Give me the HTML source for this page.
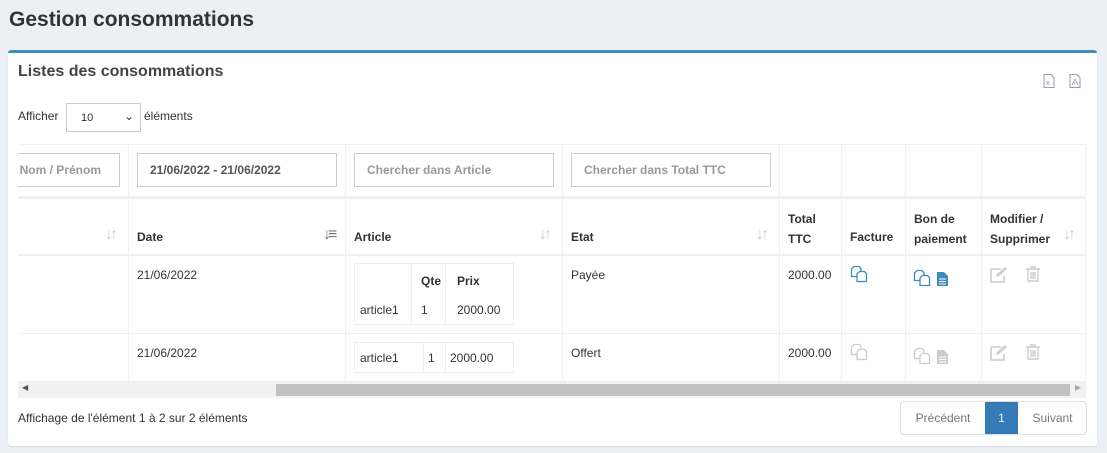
<!DOCTYPE html>
<html><head><meta charset="utf-8"><style>
*{box-sizing:border-box;margin:0;padding:0}
body{width:1107px;height:453px;background:#ecf0f5;font-family:"Liberation Sans",sans-serif;color:#333;position:relative;overflow:hidden;font-size:12px}
.a{position:absolute}
.b{font-weight:bold}
.vl{position:absolute;width:1px;background:#f0f0f0}
.hl{position:absolute;height:1px;background:#f0f0f0}
.inp{position:absolute;height:34px;border:1px solid #ccc;background:#fff;color:#999;font-weight:bold;font-size:12px;padding:9px 12px;white-space:nowrap;overflow:hidden}
.srt{position:absolute;color:#ccc;font-size:16px;font-weight:bold;letter-spacing:-3px}
</style></head><body>
<div class="a" style="left:9px;top:8px;font-size:21px;font-weight:bold;color:#333">Gestion consommations</div>
<div class="a" style="left:8px;top:50px;width:1089px;height:396px;background:#fff;border-top:3px solid #3c8dbc;border-radius:3px;box-shadow:0 1px 1px rgba(0,0,0,.1)"></div>
<div class="a" style="left:18px;top:63px;font-size:16px;font-weight:bold;color:#444">Listes des consommations</div>
<svg class="a" style="left:1043px;top:74px" width="12" height="14" viewBox="0 0 12 14"><path d="M1 .5h7l3 3v10H1z" fill="none" stroke="#99a" /><text x="3" y="11" font-size="7" fill="#88a" font-family="Liberation Sans">x</text></svg>
<svg class="a" style="left:1069px;top:74px" width="12" height="14" viewBox="0 0 12 14"><path d="M1 .5h7l3 3v10H1z" fill="none" stroke="#99a"/><path d="M3 11l3-6 3 6M4 9h4" fill="none" stroke="#99a" stroke-width=".8"/></svg>
<div class="a" style="left:18px;top:109px;font-size:12px">Afficher</div>
<div class="a" style="left:66px;top:103px;width:75px;height:29px;border:1px solid #ccc;font-size:11px;padding:8px 0 0 14px">10<span style="position:absolute;right:6px;top:5px;font-size:12px">&#8964;</span></div>
<div class="a" style="left:144px;top:109px;font-size:12px">éléments</div>

<div class="a" style="left:18px;top:144px;width:1068px;height:237px;overflow:hidden">
 <div class="hl" style="left:0;top:0;width:1068px"></div>
 <div class="a" style="left:0;top:52px;width:1068px;height:3px;background:#f0f0f0"></div>
 <div class="a" style="left:0;top:110px;width:1068px;height:2px;background:#f0f0f0"></div>
 <div class="hl" style="left:0;top:189px;width:1068px"></div>
 <div class="vl" style="left:110px;top:0;height:237px"></div>
 <div class="vl" style="left:327px;top:0;height:237px"></div>
 <div class="vl" style="left:544px;top:0;height:237px"></div>
 <div class="vl" style="left:761px;top:0;height:237px"></div>
 <div class="vl" style="left:823px;top:0;height:237px"></div>
 <div class="vl" style="left:887px;top:0;height:237px"></div>
 <div class="vl" style="left:963px;top:0;height:237px"></div>
 <div class="vl" style="left:1067px;top:0;height:237px"></div>
 <div class="inp" style="left:-40px;top:9px;width:142px;text-align:right;padding-right:18px">Nom / Prénom</div>
 <div class="inp" style="left:119px;top:9px;width:200px;color:#555;padding-left:12px">21/06/2022 - 21/06/2022</div>
 <div class="inp" style="left:336px;top:9px;width:200px">Chercher dans Article</div>
 <div class="inp" style="left:553px;top:9px;width:200px">Chercher dans Total TTC</div>
 <div class="srt" style="left:87px;top:82px">↓↑</div>
 <div class="a b" style="left:119px;top:86px">Date</div><div class="srt" style="left:305px;top:82px;color:#777">↓≡</div>
 <div class="a b" style="left:336px;top:86px">Article</div><div class="srt" style="left:521px;top:82px">↓↑</div>
 <div class="a b" style="left:553px;top:86px">Etat</div><div class="srt" style="left:738px;top:82px">↓↑</div>
 <div class="a b" style="left:770px;top:65px;line-height:20px">Total<br>TTC</div>
 <div class="a b" style="left:832px;top:86px">Facture</div>
 <div class="a b" style="left:896px;top:65px;line-height:20px">Bon de<br>paiement</div>
 <div class="a b" style="left:972px;top:65px;line-height:20px">Modifier /<br>Supprimer</div><div class="srt" style="left:1045px;top:82px">↓↑</div>
 <div class="a" style="left:119px;top:124px">21/06/2022</div>
 <div class="a" style="left:336px;top:119px;width:160px;height:62px;border:1px solid #eee"></div>
 <div class="vl" style="left:393px;top:119px;height:62px;background:#eee"></div>
 <div class="vl" style="left:427px;top:119px;height:62px;background:#eee"></div>
 <div class="a b" style="left:403px;top:130px">Qte</div><div class="a b" style="left:439px;top:130px">Prix</div>
 <div class="a" style="left:342px;top:159px">article1</div><div class="a" style="left:403px;top:159px">1</div><div class="a" style="left:439px;top:159px">2000.00</div>
 <div class="a" style="left:553px;top:124px">Payée</div>
 <div class="a" style="left:770px;top:124px">2000.00</div>
 <div class="a" style="left:119px;top:202px">21/06/2022</div>
 <div class="a" style="left:336px;top:198px;width:160px;height:31px;border:1px solid #eee"></div>
 <div class="vl" style="left:405px;top:198px;height:31px;background:#eee"></div>
 <div class="vl" style="left:427px;top:198px;height:31px;background:#eee"></div>
 <div class="a" style="left:342px;top:207px">article1</div><div class="a" style="left:410px;top:207px">1</div><div class="a" style="left:432px;top:207px">2000.00</div>
 <div class="a" style="left:553px;top:202px">Offert</div>
 <div class="a" style="left:770px;top:202px">2000.00</div>
</div>
<svg width="0" height="0" style="position:absolute"><defs>
<g id="cp"><path d="M4 1.5h5l2 2v8H1.5V4z" fill="#fff" stroke="currentColor" stroke-width="1.3"/><path d="M9.5 6.5h5l2 2v8h-9.5V9z" fill="#fff" stroke="currentColor" stroke-width="1.3"/></g>
<g id="fl"><path d="M0 0h7l4 4v10H0z" fill="currentColor"/><path d="M2 7h7M2 9.5h7M2 12h7" stroke="#fff" stroke-width="1"/></g>
<g id="ed"><path d="M1 3h10M1 3v13h13V10" fill="none" stroke="currentColor" stroke-width="1.6"/><path d="M6 11l1-3 8-7 2 2-8 7z" fill="currentColor"/></g>
<g id="tr"><path d="M1 3h14M6 3V1h4v2M3 3v12h10V3M6 6v7M8 6v7M10 6v7" fill="none" stroke="currentColor" stroke-width="1.4"/></g>
</defs></svg>
<svg class="a" style="left:850px;top:265px;color:#3c8dbc" width="18" height="18"><use href="#cp"/></svg>
<svg class="a" style="left:913px;top:269px;color:#3c8dbc" width="18" height="18"><use href="#cp"/></svg>
<svg class="a" style="left:937px;top:272px;color:#3c8dbc" width="12" height="15"><use href="#fl"/></svg>
<svg class="a" style="left:990px;top:266px;color:#ccc" width="18" height="17"><use href="#ed"/></svg>
<svg class="a" style="left:1025px;top:266px;color:#ccc" width="16" height="17"><use href="#tr"/></svg>
<svg class="a" style="left:850px;top:343px;color:#ccc" width="18" height="18"><use href="#cp"/></svg>
<svg class="a" style="left:913px;top:347px;color:#ccc" width="18" height="18"><use href="#cp"/></svg>
<svg class="a" style="left:937px;top:350px;color:#ccc" width="12" height="15"><use href="#fl"/></svg>
<svg class="a" style="left:990px;top:344px;color:#ccc" width="18" height="17"><use href="#ed"/></svg>
<svg class="a" style="left:1025px;top:344px;color:#ccc" width="16" height="17"><use href="#tr"/></svg>
<div class="a" style="left:18px;top:381px;width:1068px;height:17px;background:#f1f1f1"></div>
<div class="a" style="left:276px;top:384px;width:794px;height:12px;background:#c1c1c1"></div>
<div class="a" style="left:22px;top:383px;font-size:8px;color:#555">◀</div>
<div class="a" style="left:1075px;top:383px;font-size:8px;color:#aaa">▶</div>
<div class="a" style="left:18px;top:411px;font-size:12px">Affichage de l'élément 1 à 2 sur 2 éléments</div>
<div class="a" style="left:900px;top:401px;width:187px;height:34px;border:1px solid #ddd;border-radius:4px;overflow:hidden;font-size:12px;color:#777">
 <div class="a" style="left:0;top:0;width:84px;height:32px;padding-top:9px;text-align:center">Précédent</div>
 <div class="a" style="left:84px;top:0;width:33px;height:32px;background:#337ab7;color:#fff;padding-top:9px;text-align:center">1</div>
 <div class="a" style="left:117px;top:0;width:69px;height:32px;padding-top:9px;text-align:center">Suivant</div>
</div>
</body></html>
